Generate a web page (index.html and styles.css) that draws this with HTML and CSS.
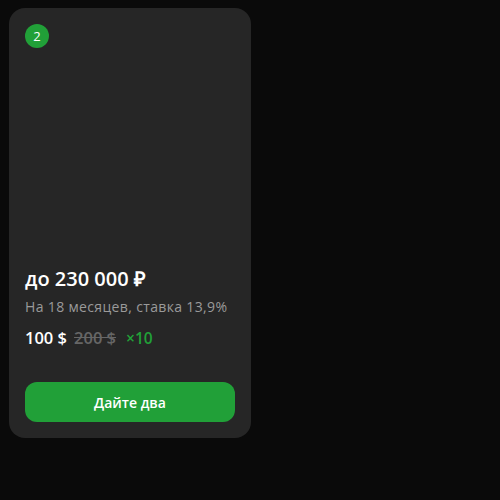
FILE: index.html
```html
<!DOCTYPE html>
<html lang="ru">
<head>
<meta charset="utf-8">
<link rel="stylesheet" href="styles.css">
</head>
<body>
<div class="card">
  <div class="badge">2</div>
  <div class="spacer"></div>
  <div class="title">до 230 000 ₽</div>
  <div class="subtitle">На 18 месяцев, ставка 13,9%</div>
  <div class="prices">
    <span class="price">100 $</span>
    <span class="old">200 $</span>
    <span class="mult">×10</span>
  </div>
  <button class="btn">Дайте два</button>
</div>
</body>
</html>
```
FILE: styles.css
```css
html, body { margin: 0; padding: 0; }
body {
  background: #0a0a0a;
  width: 500px;
  height: 500px;
  font-family: "Open Sans", sans-serif;
  padding: 8px 0 0 9px;
  box-sizing: border-box;
}
.card {
  width: 242px;
  height: 430px;
  background: #262626;
  border-radius: 16px;
  padding: 16px;
  box-sizing: border-box;
  display: flex;
  flex-direction: column;
}
.badge {
  width: 24px;
  height: 24px;
  border-radius: 50%;
  background: #21a038;
  color: #fff;
  font-size: 13px;
  display: flex;
  align-items: center;
  justify-content: center;
}
.spacer { flex: 1; }
.title {
  color: #fff;
  font-size: 20px;
  font-weight: 600;
  line-height: 26px;
}
.subtitle {
  color: #9a9a9a;
  font-size: 14px;
  letter-spacing: 0.35px;
  line-height: 18px;
  margin-top: 6px;
}
.prices {
  display: flex;
  align-items: baseline;
  gap: 7px;
  margin-top: 12px;
  font-size: 16.5px;
  font-weight: 600;
  line-height: 20px;
}
.price { color: #fff; }
.old { color: #666; text-decoration: line-through; }
.mult { color: #21a038; font-size: 15.5px; margin-left: 3px; }
.btn {
  margin-top: 34px;
  height: 40px;
  border: none;
  border-radius: 12px;
  background: #21a038;
  color: #fff;
  font-family: inherit;
  font-size: 14px;
  font-weight: 600;
}
```
